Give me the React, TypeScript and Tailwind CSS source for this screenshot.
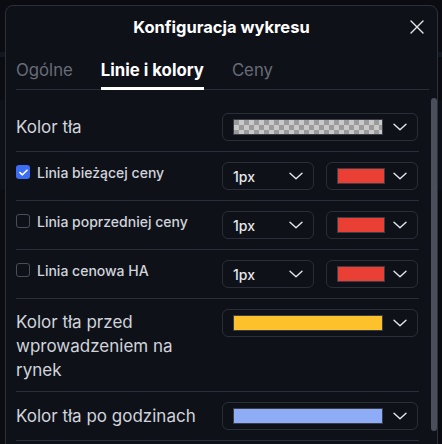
import React from "react";

const Chevron = () => (
  <svg width="14" height="8" viewBox="0 0 14 8" fill="none" className="shrink-0">
    <path d="M1 1.2 L7 6.8 L13 1.2" stroke="#e5e7eb" strokeWidth="1.4" strokeLinecap="round" strokeLinejoin="round" />
  </svg>
);

const Checker = () => (
  <svg width="150" height="16" className="block border border-[#3a3d45]">
    <defs>
      <pattern id="chk" width="10" height="10" patternUnits="userSpaceOnUse">
        <rect width="10" height="10" fill="#c9c9c9" />
        <rect width="5" height="5" fill="#9b9b9b" />
        <rect x="5" y="5" width="5" height="5" fill="#9b9b9b" />
      </pattern>
    </defs>
    <rect width="150" height="16" fill="url(#chk)" />
  </svg>
);

const WideColor = ({ swatch }: { swatch: React.ReactNode }) => (
  <div className="w-[196px] h-[28px] border border-[#2a2e39] rounded-[6px] flex items-center pl-[10px] pr-[10px] justify-between">
    {swatch}
    <Chevron />
  </div>
);

const SmallSelect = () => (
  <div className="w-[92px] h-[28px] border border-[#2a2e39] rounded-[6px] flex items-center pl-[10px] pr-[10px] justify-between">
    <span className="text-[14px] font-medium text-[#e5e7eb]">1px</span>
    <Chevron />
  </div>
);

const SmallColor = () => (
  <div className="w-[92px] h-[28px] border border-[#2a2e39] rounded-[6px] flex items-center pl-[10px] pr-[10px] justify-between">
    <div className="w-[48px] h-[16px] bg-[#ea3f35] border border-[#3a3d45]" />
    <Chevron />
  </div>
);

const Checkbox = ({ checked }: { checked?: boolean }) =>
  checked ? (
    <div className="w-[14px] h-[14px] rounded-[3px] bg-[#3d6df2] flex items-center justify-center shrink-0">
      <svg width="9" height="7" viewBox="0 0 9 7" fill="none">
        <path d="M1 3.6 L3.4 5.8 L8 1.2" stroke="white" strokeWidth="1.6" strokeLinecap="round" strokeLinejoin="round" />
      </svg>
    </div>
  ) : (
    <div className="w-[14px] h-[14px] rounded-[3px] border border-[#4a4e59] shrink-0" />
  );

const LineRow = ({ label, checked }: { label: string; checked?: boolean }) => (
  <div className="flex items-start justify-between pt-[10px] pb-[10px] border-b border-[#2a2e39]">
    <div className="flex items-center gap-[7px] h-[20px]">
      <Checkbox checked={checked} />
      <span className="text-[14px] font-medium text-[#d1d4dc]">{label}</span>
    </div>
    <div className="flex gap-[12px] mr-[1px]">
      <SmallSelect />
      <SmallColor />
    </div>
  </div>
);

export default function App() {
  return (
    <div
      className="w-[442px] h-[444px] overflow-hidden bg-[#0a0c11] relative"
      style={{ fontFamily: "Inter, 'Noto Sans', sans-serif" }}
    >
      <div className="absolute left-0 top-[52px] w-[442px] h-[5px] bg-[#131722]" />
      <div className="absolute left-0 top-[100px] w-[442px] h-[90px] bg-[#0d1017]" />
      <div className="absolute left-[5px] top-[5px] w-[433px] h-[480px] bg-[#0f1118] border border-[#2c303a] rounded-[8px] flex flex-col">
        <div className="h-[42px] flex items-center justify-center relative shrink-0">
          <span className="text-[16.5px] font-bold text-white">Konfiguracja wykresu</span>
          <svg className="absolute right-[13px] top-[14px]" width="14" height="14" viewBox="0 0 14 14" fill="none">
            <path d="M1 1 L13 13 M13 1 L1 13" stroke="#e5e7eb" strokeWidth="1.4" strokeLinecap="round" />
          </svg>
        </div>
        <div className="ml-[10px] mr-[8px] h-[42px] flex items-end gap-[28px] border-b border-[#2a2e39] shrink-0">
          <span className="relative pb-[7px] text-[16.75px] leading-6 text-[#676c78]">Ogólne</span>
          <span className="relative pb-[7px] text-[16.75px] leading-6 font-bold text-white">
            Linie i kolory
            <span className="absolute left-0 right-0 bottom-[-1px] h-[3px] bg-white" />
          </span>
          <span className="relative pb-[7px] text-[16.75px] leading-6 text-[#676c78]">Ceny</span>
        </div>
        <div className="flex flex-1 mt-[13px]">
          <div className="ml-[10px] w-[403px] flex flex-col">
            <div className="flex items-start justify-between pt-[10px] pb-[10px] border-b border-[#2a2e39]">
              <span className="text-[17px] leading-[28px] text-[#d1d4dc]">Kolor tła</span>
              <div className="mr-[1px]">
                <WideColor swatch={<Checker />} />
              </div>
            </div>
            <LineRow label="Linia bieżącej ceny" checked />
            <LineRow label="Linia poprzedniej ceny" />
            <LineRow label="Linia cenowa HA" />
            <div className="flex items-start justify-between pt-[10px] pb-[9px] border-b border-[#2a2e39]">
              <span className="text-[17px] leading-[24px] text-[#d1d4dc] w-[180px] pt-[1px]">
                Kolor tła przed wprowadzeniem na rynek
              </span>
              <div className="mr-[1px]">
                <WideColor swatch={<div className="w-[150px] h-[16px] bg-[#fcc12b] border border-[#3a3d45]" />} />
              </div>
            </div>
            <div className="flex items-start justify-between pt-[10px] pb-[10px] border-b border-[#2a2e39]">
              <span className="text-[17px] leading-[28px] text-[#d1d4dc]">Kolor tła po godzinach</span>
              <div className="mr-[1px]">
                <WideColor swatch={<div className="w-[150px] h-[16px] bg-[#8fadf6] border border-[#3a3d45]" />} />
              </div>
            </div>
          </div>
          <div className="ml-[12px] -mt-[5px] w-[6px] h-[333px] rounded-full bg-[#4a4f5b]" />
        </div>
      </div>
    </div>
  );
}
